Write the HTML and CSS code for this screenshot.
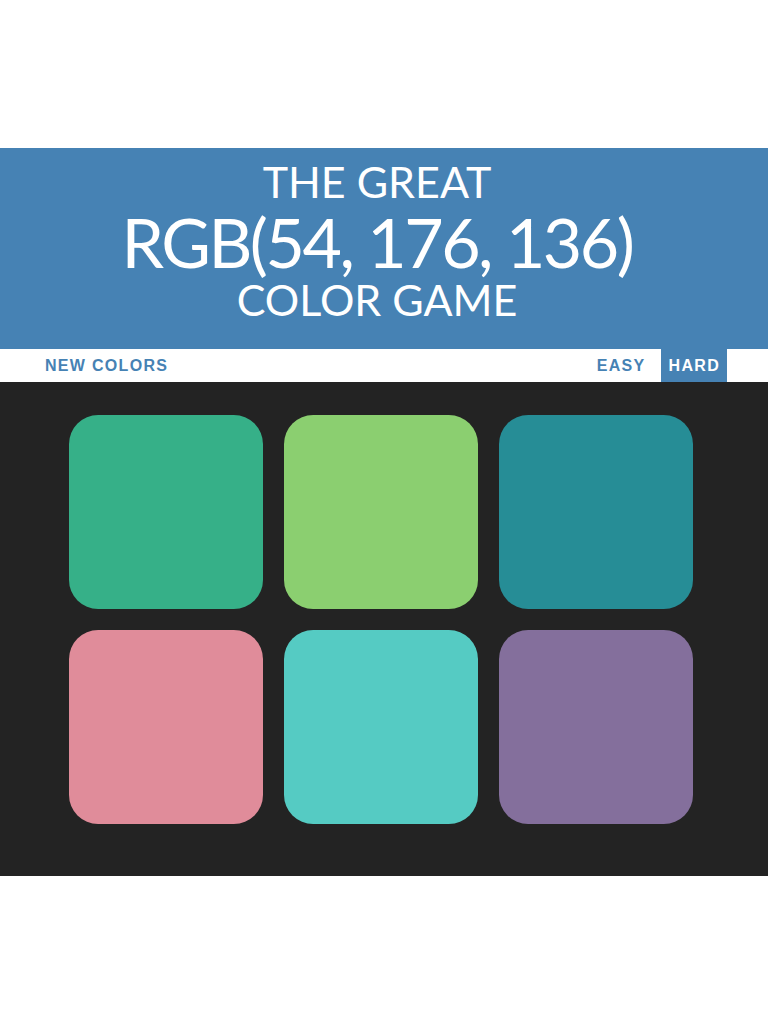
FILE: index.html
```html
<!DOCTYPE html>
<html lang="en">
<head>
<meta charset="utf-8">
<title>Color Game</title>
<link rel="stylesheet" href="styles.css">
</head>
<body>
<main class="game">
  <h1 class="title">
    <span class="title-line">The Great</span>
    <span class="title-rgb">RGB(54, 176, 136)</span>
    <span class="title-line title-last">Color Game</span>
  </h1>
  <nav class="stripe">
    <button class="btn">New Colors</button>
    <span class="message"></span>
    <div class="modes">
      <button class="btn mode">Easy</button>
      <button class="btn mode selected">Hard</button>
    </div>
  </nav>
  <section class="board">
    <div class="grid">
      <div class="square sq1"></div>
      <div class="square sq2"></div>
      <div class="square sq3"></div>
      <div class="square sq4"></div>
      <div class="square sq5"></div>
      <div class="square sq6"></div>
    </div>
  </section>
</main>
</body>
</html>
```

FILE: styles.css
```css
html, body {
  margin: 0;
  padding: 0;
  background: #ffffff;
}

.game {
  margin-top: 148px;
}

.title {
  margin: 0;
  background: #4682b4;
  color: #ffffff;
  font-family: Lato, "Open Sans", sans-serif;
  font-weight: 400;
  text-transform: uppercase;
  text-align: center;
  padding: 10px 14px 28px 0;
  display: flex;
  flex-direction: column;
  align-items: center;
}

.title-line {
  display: block;
  font-size: 43px;
  line-height: 48px;
}

.title-last {
  line-height: 43px;
}

.title-rgb {
  display: block;
  font-size: 68px;
  line-height: 72px;
  letter-spacing: -2.5px;
}

.stripe {
  background: #ffffff;
  height: 33px;
  display: flex;
  align-items: stretch;
  justify-content: space-between;
  padding: 0 41px 0 38px;
}

.btn {
  border: none;
  background: none;
  margin: 0;
  padding: 0 7px;
  font-family: "Liberation Sans", Arial, sans-serif;
  font-weight: 700;
  font-size: 16px;
  letter-spacing: 1.3px;
  text-transform: uppercase;
  color: #4682b4;
  height: 33px;
  cursor: pointer;
}

.modes {
  display: flex;
  gap: 8px;
}

.mode.selected {
  background: #4682b4;
  color: #ffffff;
  padding: 0 7px 0 8px;
}

.board {
  background: #232323;
  padding: 33px 0 52px 69px;
}

.grid {
  display: grid;
  grid-template-columns: repeat(3, 194px);
  grid-auto-rows: 194px;
  column-gap: 21px;
  row-gap: 21px;
}

.square {
  border-radius: 15%;
}

.sq1 { background: #36b088; }
.sq2 { background: #8bcf70; }
.sq3 { background: #268d96; }
.sq4 { background: #e08c9a; }
.sq5 { background: #55cbc3; }
.sq6 { background: #846f9c; }
```
